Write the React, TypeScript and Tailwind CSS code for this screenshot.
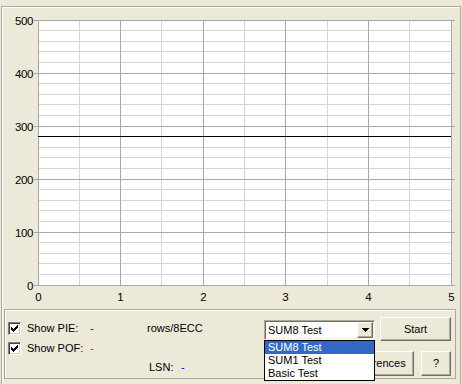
import React from 'react';

const L = 38;
const R = 451;
const T = 20;
const B = 285;

const yOf = (v: number) => Math.floor(B - (v / 500) * (B - T)) + 0.5;
const xOf = (u: number) => Math.floor(L + (u / 5) * (R - L)) + 0.5;

function Chart() {
  const minorY: number[] = [];
  for (let v = 20; v < 500; v += 20) if (v % 100 !== 0) minorY.push(v);
  const majorY = [0, 100, 200, 300, 400, 500];
  const minorX = [0.5, 1.5, 2.5, 3.5, 4.5];
  const majorX = [0, 1, 2, 3, 4, 5];

  return (
    <svg width={458} height={302} className="block">
      <g transform="translate(-2 -7)" shapeRendering="crispEdges">
        <rect x={L} y={T} width={R - L} height={B - T} fill="#ffffff" />
        {minorY.map((v) => (
          <line key={'my' + v} x1={L} x2={R} y1={yOf(v)} y2={yOf(v)} stroke="#d4d4d4" />
        ))}
        {minorX.map((u) => (
          <line key={'mx' + u} x1={xOf(u)} x2={xOf(u)} y1={T} y2={B} stroke="#d4d4d4" />
        ))}
        {majorX.map((u) => (
          <line key={'Mx' + u} x1={xOf(u)} x2={xOf(u)} y1={T} y2={B + 1} stroke="#a8a8a8" />
        ))}
        {majorY.map((v) => (
          <line key={'My' + v} x1={L - 4} x2={R + 4} y1={yOf(v)} y2={yOf(v)} stroke="#a8a8a8" />
        ))}
        <line x1={L} x2={R} y1={136.5} y2={136.5} stroke="#000000" />
      </g>
      <g transform="translate(-2 -7)" fontFamily="'Liberation Sans', Arial, sans-serif" fontSize={11.5} fill="#000">
        {majorY.map((v) => (
          <text key={'ly' + v} x={33} y={yOf(v) + 4} textAnchor="end" letterSpacing={-0.4}>
            {v}
          </text>
        ))}
        {majorX.map((u) => (
          <text key={'lx' + u} x={xOf(u)} y={301} textAnchor="middle">
            {u}
          </text>
        ))}
      </g>
    </svg>
  );
}

function CheckBox() {
  return (
    <span className="relative block w-[13px] h-[13px] bg-white border border-t-[#808080] border-l-[#808080] border-b-white border-r-white shadow-[inset_1px_1px_0_#404040,inset_-1px_-1px_0_#d4d0c8]">
      <svg width={7} height={7} className="absolute left-[2px] top-[2px]" shapeRendering="crispEdges">
        {[2, 3, 4, 3, 2, 1, 0].map((top, i) => (
          <rect key={i} x={i} y={top} width={1} height={3} fill="#000" />
        ))}
      </svg>
    </span>
  );
}

function Button({ className, children }: { className: string; children: React.ReactNode }) {
  return (
    <div
      className={`flex items-center justify-center bg-[#ece9d8] border border-t-white border-l-white border-b-[#716f64] border-r-[#716f64] shadow-[inset_-1px_-1px_0_#aca899] ${className}`}
    >
      {children}
    </div>
  );
}

function Select() {
  return (
    <div className="relative mt-[3px] w-[111px] h-[20px]">
      <div className="flex w-full h-full bg-white border border-t-[#aca899] border-l-[#aca899] border-b-white border-r-white shadow-[inset_1px_1px_0_#716f64,inset_-1px_-1px_0_#f1efe2] p-[1px]">
        <div className="flex-1 pl-[2px] leading-[16px]">SUM8 Test</div>
        <Button className="w-[16px] h-[16px]">
          <svg width={7} height={4} shapeRendering="crispEdges">
            <rect x={0} y={0} width={7} height={1} fill="#000" />
            <rect x={1} y={1} width={5} height={1} fill="#000" />
            <rect x={2} y={2} width={3} height={1} fill="#000" />
            <rect x={3} y={3} width={1} height={1} fill="#000" />
          </svg>
        </Button>
      </div>
      <div className="absolute left-0 top-[20px] z-10 w-[111px] h-[41px] bg-white border border-black">
        <div className="h-[13px] leading-[13px] pl-[3px] bg-[#316ac5] text-white">SUM8 Test</div>
        <div className="h-[13px] leading-[13px] pl-[3px]">SUM1 Test</div>
        <div className="h-[13px] leading-[13px] pl-[3px]">Basic Test</div>
      </div>
    </div>
  );
}

export default function App() {
  return (
    <div className="w-[462px] h-[384px] overflow-hidden bg-[#ece9d8] font-['Liberation_Sans',Arial,sans-serif] text-[11px] text-black">
      <div className="ml-[1px] mt-[6px] w-[460px] h-[378px] border-l border-t border-r border-[#aca899] shadow-[inset_1px_1px_0_white]">
        <Chart />
        <div className="ml-[2px] w-[452px] h-[70px] flex border border-[#aca899] shadow-[inset_1px_1px_0_white]">
          <div className="ml-[3px] w-[139px] pt-[12px] flex flex-col gap-[7px]">
            <div className="flex items-center h-[13px]">
              <CheckBox />
              <span className="ml-[6px] w-[63px] leading-[13px]">Show PIE:</span>
              <span className="text-[#0000ff] leading-[13px]">-</span>
            </div>
            <div className="flex items-center h-[13px]">
              <CheckBox />
              <span className="ml-[6px] w-[63px] leading-[13px]">Show POF:</span>
              <span className="text-[#ff0000] leading-[13px]">-</span>
            </div>
          </div>
          <div className="w-[117px] pt-[11px] flex flex-col">
            <div className="h-[14px] leading-[14px]">rows/8ECC</div>
            <div className="mt-[25px] h-[14px] leading-[14px] pl-[2px] flex">
              <span className="w-[32px]">LSN:</span>
              <span className="text-[#0000ff]">-</span>
            </div>
          </div>
          <div className="w-[187px] pt-[7px] flex flex-col">
            <div className="flex items-start h-[24px]">
              <Select />
              <Button className="ml-[5px] w-[71px] h-[24px]">Start</Button>
            </div>
            <div className="mt-[10px] flex justify-end gap-[7px]">
              <Button className="w-[76px] h-[25px]">Preferences</Button>
              <Button className="w-[30px] h-[25px]">?</Button>
            </div>
          </div>
        </div>
      </div>
    </div>
  );
}
